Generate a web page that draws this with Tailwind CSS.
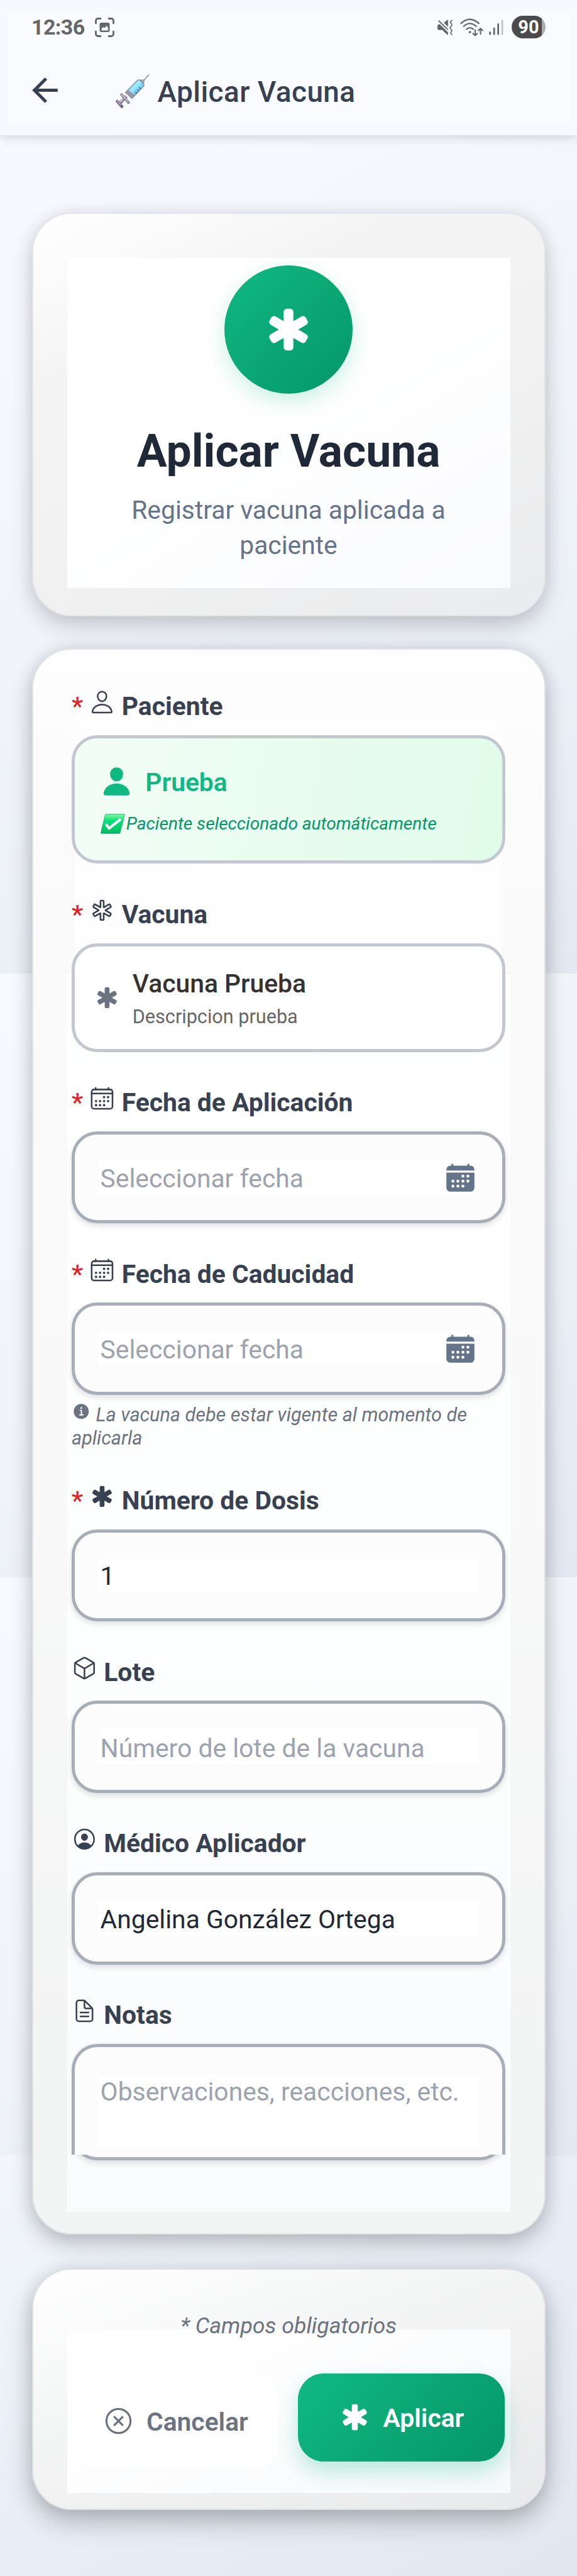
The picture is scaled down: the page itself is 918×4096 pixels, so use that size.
<!DOCTYPE html>
<html lang="es">
<head>
<meta charset="utf-8">
<title>Aplicar Vacuna</title>
<script src="https://cdn.jsdelivr.net/npm/@tailwindcss/browser@4"></script>
</head>
<body class="relative h-[4096px] w-[918px] overflow-hidden bg-[#f1f5fa] font-[Roboto,sans-serif] text-[40.8px] leading-[48px]">

<!-- Icon set -->
<svg class="hidden">
  <symbol id="person-outline" viewBox="0 0 512 512"><g fill="none" stroke="currentColor" stroke-width="32" stroke-linecap="round" stroke-linejoin="round"><path d="M344 144c-3.92 52.87-44 96-88 96s-84.15-43.12-88-96c-4-55 35-96 88-96s92 42 88 96z"/><path d="M256 304c-87 0-175.3 48-191.64 138.6C62.39 453.52 68.57 464 80 464h352c11.44 0 17.62-10.48 15.65-21.4C431.3 352 343 304 256 304z"/></g></symbol>
  <symbol id="person" viewBox="0 0 512 512"><path fill="currentColor" d="M332.64 64.58C313.18 43.57 286 32 256 32c-30.16 0-57.43 11.5-76.8 32.38-19.58 21.11-29.12 49.8-26.88 80.78C156.76 206.28 203.27 256 256 256s99.16-49.71 103.67-110.82c2.27-30.7-7.33-59.33-27.03-80.6zM432 480H80a31 31 0 01-24.2-11.13c-6.5-7.77-9.12-18.38-7.18-29.11C57.06 392.94 83.4 353.61 124.8 326c36.78-24.51 83.37-38 131.2-38s94.42 13.5 131.2 38c41.4 27.6 67.74 66.93 76.18 113.75 1.94 10.73-.68 21.34-7.18 29.11A31 31 0 01432 480z"/></symbol>
  <symbol id="medical" viewBox="0 0 512 512"><path fill="currentColor" d="M272 464h-32a32 32 0 01-32-32l.05-85.82a4 4 0 00-6-3.47l-74.34 43.06a31.48 31.48 0 01-43-11.52l-16.5-28.64-.06-.1a31.65 31.65 0 0111.56-42.8l74.61-43.25a4 4 0 000-6.92l-74.54-43.21a31.41 31.41 0 01-11.55-43l16.44-28.55a31.48 31.48 0 0119.27-14.74 31.14 31.14 0 0123.8 3.2l74.31 43a4 4 0 006-3.47L208 80a32 32 0 0132-32h32a32 32 0 0132 32v85.72a4 4 0 006 3.47l74.34-43.06a31.51 31.51 0 0143 11.52l16.49 28.64.06.09a31.52 31.52 0 01-11.64 42.86l-74.53 43.2a4 4 0 000 6.92l74.53 43.2a31.42 31.42 0 0111.56 43l-16.44 28.55a31.48 31.48 0 01-19.27 14.74 31.14 31.14 0 01-23.8-3.2l-74.31-43a4 4 0 00-6 3.46L304 432a32 32 0 01-32 32z"/></symbol>
  <symbol id="medical-outline" viewBox="0 0 512 512"><path fill="none" stroke="currentColor" stroke-width="32" d="M429.93 174.27l-16.47-28.59a15.49 15.49 0 00-21.15-5.7l-98.39 57a4 4 0 01-6-3.5L288 80a16 16 0 00-16-16h-32a16 16 0 00-16 16l.07 113.57a4 4 0 01-6 3.5l-98.39-57a15.49 15.49 0 00-21.15 5.7l-16.46 28.5a15.42 15.42 0 005.69 21.1l98.49 57.08a4 4 0 010 6.9l-98.49 57.08a15.54 15.54 0 00-5.69 21.1l16.47 28.59a15.49 15.49 0 0021.15 5.7l98.39-57a4 4 0 016 3.5L224 432a16 16 0 0016 16h32a16 16 0 0016-16l-.07-113.57a4 4 0 016-3.5l98.39 57a15.49 15.49 0 0021.15-5.7l16.47-28.59a15.42 15.42 0 00-5.69-21.1l-98.49-57.08a4 4 0 010-6.9l98.49-57.08a15.51 15.51 0 005.68-21.21z"/></symbol>
  <symbol id="calendar-outline" viewBox="0 0 512 512"><rect x="48" y="80" width="416" height="384" rx="48" fill="none" stroke="currentColor" stroke-width="32"/><path d="M128 48v32M384 48v32M464 160H48" fill="none" stroke="currentColor" stroke-width="32" stroke-linecap="round"/><g fill="currentColor"><circle cx="296" cy="232" r="24"/><circle cx="376" cy="232" r="24"/><circle cx="136" cy="312" r="24"/><circle cx="216" cy="312" r="24"/><circle cx="296" cy="312" r="24"/><circle cx="376" cy="312" r="24"/><circle cx="136" cy="392" r="24"/><circle cx="216" cy="392" r="24"/><circle cx="296" cy="392" r="24"/></g></symbol>
  <symbol id="calendar" viewBox="0 0 512 512"><path fill="currentColor" d="M480 128a64 64 0 00-64-64h-16V48.45c0-8.61-6.62-16-15.23-16.43A16 16 0 00368 48v16H144V48.45c0-8.61-6.62-16-15.23-16.43A16 16 0 00112 48v16H96a64 64 0 00-64 64v12a4 4 0 004 4h440a4 4 0 004-4zM32 416a64 64 0 0064 64h320a64 64 0 0064-64V179a3 3 0 00-3-3H35a3 3 0 00-3 3z"/><g fill="#fff"><circle cx="296" cy="232" r="24"/><circle cx="376" cy="232" r="24"/><circle cx="136" cy="312" r="24"/><circle cx="216" cy="312" r="24"/><circle cx="296" cy="312" r="24"/><circle cx="376" cy="312" r="24"/><circle cx="136" cy="392" r="24"/><circle cx="216" cy="392" r="24"/><circle cx="296" cy="392" r="24"/></g></symbol>
  <symbol id="cube-outline" viewBox="0 0 512 512"><g fill="none" stroke="currentColor" stroke-width="32" stroke-linecap="round" stroke-linejoin="round"><path d="M448 341.37V170.61A32 32 0 00432.11 143l-152-88.46a47.94 47.94 0 00-48.24 0L79.89 143A32 32 0 0064 170.61v170.76A32 32 0 0079.89 369l152 88.46a48 48 0 0048.24 0l152-88.46A32 32 0 00448 341.37z"/><path d="M69 153.99l187 110 187-110M256 463.99v-200"/></g></symbol>
  <symbol id="person-circle-outline" viewBox="0 0 512 512"><g fill="currentColor"><path d="M258.9 48C141.92 46.42 46.42 141.92 48 258.9c1.56 112.19 92.91 203.54 205.1 205.1 117 1.6 212.48-93.9 210.88-210.88C462.44 140.91 371.09 49.56 258.9 48zm126.42 327.25a4 4 0 01-6.14-.32 124.27 124.27 0 00-32.35-29.59C321.37 329 289.11 320 256 320s-65.37 9-90.83 25.34a124.24 124.24 0 00-32.35 29.58 4 4 0 01-6.14.32A175.32 175.32 0 0180 259c-1.63-97.31 78.22-178.76 175.57-179S432 158.81 432 256a175.32 175.32 0 01-46.68 119.25z"/><path d="M256 144c-19.72 0-37.55 7.39-50.22 20.82s-19 32-17.57 51.93C191.11 256 221.52 288 256 288s64.83-32 67.79-71.24c1.48-19.74-4.8-38.14-17.68-51.82C293.39 151.44 275.59 144 256 144z"/></g></symbol>
  <symbol id="document-text-outline" viewBox="0 0 512 512"><g fill="none" stroke="currentColor" stroke-width="32" stroke-linecap="round" stroke-linejoin="round"><path d="M416 221.25V416a48 48 0 01-48 48H144a48 48 0 01-48-48V96a48 48 0 0148-48h98.75a32 32 0 0122.62 9.37l141.26 141.26a32 32 0 019.37 22.62z"/><path d="M256 56v120a32 32 0 0032 32h120M176 288h160M176 368h160"/></g></symbol>
  <symbol id="information-circle" viewBox="0 0 512 512"><path fill="currentColor" d="M256 56C145.72 56 56 145.72 56 256s89.72 200 200 200 200-89.72 200-200S366.28 56 256 56zm0 82a26 26 0 11-26 26 26 26 0 0126-26zm48 226h-88a16 16 0 010-32h28v-88h-16a16 16 0 010-32h32a16 16 0 0116 16v104h28a16 16 0 010 32z"/></symbol>
  <symbol id="close-circle-outline" viewBox="0 0 512 512"><g fill="none" stroke="currentColor" stroke-width="32" stroke-linecap="round" stroke-linejoin="round"><path d="M448 256c0-106-86-192-192-192S64 150 64 256s86 192 192 192 192-86 192-192z"/><path d="M320 320L192 192M192 320l128-128"/></g></symbol>
</svg>

<!-- Page background bands -->
<div class="absolute inset-0 -z-10 flex flex-col">
  <div class="h-[1548px] bg-[linear-gradient(150deg,#f9faff_0%,#f2f6fb_45%,#e9edf5_85%,#e4e9f1_100%)]"></div>
  <div class="h-[960px] bg-[linear-gradient(145deg,#f7fbff_0%,#f0f4f9_50%,#e3e8f2_100%)]"></div>
  <div class="h-[919px] bg-[linear-gradient(145deg,#f7fbff_0%,#f0f4f9_50%,#e3e8f2_100%)]"></div>
  <div class="grow bg-[linear-gradient(150deg,#f3f7fc_0%,#e8edf6_55%,#e1e8f0_100%)]"></div>
</div>

<header class="relative z-10 h-[215px] bg-[#f7f9fe] px-[13px] pt-[18px] shadow-[0_3px_16px_rgba(0,0,0,0.16)]">
  <div class="h-[181px] bg-[#f9fbff]">
    <!-- Status bar -->
    <div class="flex h-[50px] items-center pr-[37px] pl-[37px] text-[#666]">
      <span class="text-[34px] font-bold tracking-[-0.6px]">12:36</span>
      <svg class="ml-[16px] size-[31px]" viewBox="0 0 31 31"><path d="M1.5 9V5a3.5 3.5 0 0 1 3.5-3.5h4M22 1.5h4A3.5 3.5 0 0 1 29.500 5v4M29.500 22v4a3.5 3.5 0 0 1-3.500 3.500h-4M9 29.500H5A3.500 3.500 0 0 1 1.500 26v-4" fill="none" stroke="currentColor" stroke-width="2.800" stroke-linecap="round"/><rect x="7.500" y="8" width="16" height="15" rx="3" fill="currentColor"/><path d="M10.500 20.500v-3l3-2.500 2 1.500 3-3.500 2.500 3v4.500z" fill="#f9fbff"/></svg>
      <div class="ml-auto flex items-center">
        <svg class="h-[25px] w-[26px]" viewBox="154 82 120 120"><path d="M156 132q0-13 13-13h6l62 60v14q0 8-6 5l-38-36h-24q-13 0-13-13zM237 138V88q0-6-5-3l-27 22z" fill="currentColor"/><path d="M167 92l68 68" stroke="#f9fbff" stroke-width="20"/><path d="M167 93l66 64" stroke="currentColor" stroke-width="9" stroke-linecap="round"/><path d="M268 89q-18 10-12 18 16 16 8 24-16 14-8 22 16 12 8 20-14 12 3 24" fill="none" stroke="currentColor" stroke-width="8" stroke-linecap="round"/></svg>
        <svg class="ml-[11px] h-[29px] w-[37px]" viewBox="329 74 175 134"><g fill="none" stroke="currentColor" stroke-width="11" stroke-linecap="round"><path d="M336 111q66-60 134 0M356 133q46-42 94 0M378 155q25-22 50 0"/></g><circle cx="403" cy="177" r="9" fill="currentColor"/><path d="M442 160v42M426 187l16 16 16-16M483 192v-42M467 165l16-16 16 16" stroke="currentColor" stroke-width="10" fill="none" stroke-linecap="round" stroke-linejoin="round"/></svg>
        <svg class="ml-[9px] h-[25px] w-[23px]" viewBox="541 82 110 118"><g stroke="currentColor" stroke-width="13" stroke-linecap="round"><path d="M549 179v14M580 149v44M611 117v76"/><path d="M642 89v104" opacity=".4"/></g></svg>
        <div class="ml-[13px] flex h-[36px] w-[54px] items-center justify-center rounded-full bg-[linear-gradient(90deg,#4b4b4b_89%,#aeaeb0_89%)] text-[29px] font-bold text-white"><span>90</span></div>
      </div>
    </div>
    <!-- App bar -->
    <div class="mt-[45px] flex h-[60px] items-center pl-[28px] text-[#374151]">
      <svg class="size-[61px]" viewBox="0 0 24 24"><path fill="currentColor" d="M20 11H7.830l5.590-5.590L12 4l-8 8 8 8 1.410-1.410L7.830 13H20z"/></svg>
      <svg class="ml-[82px] mt-1 size-[54px]" viewBox="0 0 54 54">
        <defs><linearGradient id="fluid" x1="0" y1="0" x2="1" y2="1"><stop offset="0" stop-color="#5ccdfb"/><stop offset=".45" stop-color="#9cecff"/><stop offset="1" stop-color="#2f7fdc"/></linearGradient></defs>
        <path d="M53 .5 43 12" stroke="#8d8d95" stroke-width="1.600"/>
        <path d="M38 9l7 7 1-5-3-3z" fill="#a39eab"/>
        <path d="M35 9.500q2-1.500 4 .5l5 5q2 2 .5 4L26 38.500 15.500 29z" fill="url(#fluid)" stroke="#7c8aa8" stroke-width="1.300"/>
        <path d="M30.500 33.500 26 38.500 15.500 29l4-4.500z" fill="#9b95a8"/>
        <path d="M40 23l-3-2M37 26.500l-3-2M34 30l-3-2" stroke="#21508f" stroke-width="1.200"/>
        <path d="M17 35 6 47" stroke="#8e8699" stroke-width="5.500"/><path d="M16.500 34 6 45.500" stroke="#d5d0dc" stroke-width="1.800"/>
        <path d="M9.500 32.500 20.500 45" stroke="#8b8494" stroke-width="4.500" stroke-linecap="round"/><path d="M9.500 32 20 44" stroke="#cdc8d3" stroke-width="1.600" stroke-linecap="round"/>
        <path d="M2.500 43 10 51.500" stroke="#6f5f7e" stroke-width="4.500" stroke-linecap="round"/><path d="M2.500 42.500 8 48.500" stroke="#c5bfcc" stroke-width="1.600" stroke-linecap="round"/>
      </svg>
      <h1 class="ml-[12.500px] pt-[6px] text-[45.9px] font-medium tracking-[0.460px]">Aplicar Vacuna</h1>
    </div>
  </div>
</header>

<main class="flex flex-col px-[50.5px] pt-[123px]">

  <!-- Intro card -->
  <section class="h-[641.500px] rounded-[63px] border-[2.500px] border-[#e3e4e8] bg-[linear-gradient(155deg,#fff_0%,#f4f4f4_28%,#f1f1f1_60%,#eaebed_100%)] px-[54px] pt-[70px] shadow-[0_16px_36px_rgba(0,0,0,0.17),0_0_24px_rgba(0,0,0,0.08)]">
    <div class="flex h-[525px] flex-col items-center bg-[linear-gradient(150deg,#fff_40%,#fafbfe_100%)] pt-[12px] text-center">
      <div class="flex size-[204px] shrink-0 items-center justify-center rounded-full bg-linear-135 from-[#10b981] to-[#059669] text-white shadow-[0_12px_34px_rgba(16,185,129,0.22)]"><svg class="size-[82px]"><use href="#medical"/></svg></div>
      <h2 class="mt-[50px] text-[71.4px] leading-[84px] font-bold text-[#1f2937]">Aplicar Vacuna</h2>
      <p class="mt-[22.500px] w-[560px] text-[40.8px] leading-[56px] text-[#64748b]">Registrar vacuna aplicada a paciente</p>
    </div>
  </section>

  <!-- Form card -->
  <section class="relative mt-[51px] h-[2522.500px] rounded-[63px] border-[2.500px] border-[#e0e2e6] bg-[linear-gradient(180deg,#fefefe_0%,#fafafa_15%,#f8f9f8_50%,#f2f3f3_100%)] px-[61.500px] pt-[66.500px] text-[#374151] shadow-[0_16px_36px_rgba(0,0,0,0.2),0_0_26px_rgba(0,0,0,0.1)]">
    <div class="absolute inset-x-[54px] top-[99px] flex flex-col">
      <div class="mx-[12.500px] h-[417px] bg-[#fefefe]"></div>
      <div class="h-[1968px] bg-[linear-gradient(180deg,#fff_0%,#fdfefe_50%,#fafbfd_100%)]"></div>
    </div>

    <div class="relative flex flex-col gap-[56.600px]">
      <div>
        <div class="flex h-12 items-start font-bold"><span class="w-[28.300px] font-medium text-[#dc2626]">*</span><svg class="-mt-[3px] mr-[10.700px] size-[40.8px]"><use href="#person-outline"/></svg>Paciente</div>
        <div class="mt-[21.600px] flex h-[204.800px] flex-col rounded-[40.8px] border-[5.100px] border-[#c3c8d0] bg-linear-100 from-[#f2fdf6] to-[#e1fce9] bg-clip-padding px-[40.8px] pt-[40px]">
          <div class="flex h-[58px] items-center text-[#10b981]"><svg class="mr-[20.500px] size-[51px]"><use href="#person"/></svg><span class="pt-[3px] font-semibold">Prueba</span></div>
          <div class="mt-[18px] flex h-[40px] items-center text-[28.050px] text-[#059669] italic">
            <svg class="mr-[2px] h-[32px] w-[39px]" viewBox="0 0 39 32"><defs><linearGradient id="tick" x1="0" y1="0" x2="0" y2="1"><stop offset="0" stop-color="#8cf59b"/><stop offset=".35" stop-color="#00df7c"/><stop offset=".9" stop-color="#00c463"/><stop offset="1" stop-color="#0aa08c"/></linearGradient></defs><path d="M9 .7h28q1.400 0 1.100 1.400l-7 27.700q-.4 1.500-2 1.500H1.600q-1.400 0-1-1.500L7.300 2.100Q7.600.7 9 .7z" fill="url(#tick)" stroke="#12a868" stroke-width=".8"/><path d="M8.500 16.500l5 6.500L32 8.500" fill="none" stroke="#fff" stroke-width="4.200"/></svg>
            <span>Paciente seleccionado automáticamente</span>
          </div>
        </div>
      </div>

      <div>
        <div class="flex h-12 items-start font-bold"><span class="w-[28.300px] font-medium text-[#dc2626]">*</span><svg class="-mt-[3px] mr-[10.700px] size-[40.8px]"><use href="#medical-outline"/></svg>Vacuna</div>
        <div class="mt-[21.600px] flex h-[173px] items-center rounded-[40.8px] border-[5.100px] border-[#c3c8d0] bg-white px-[30.600px]">
          <svg class="mr-[20.400px] size-[40.8px] text-[#6b7280]"><use href="#medical"/></svg>
          <div class="flex flex-col pt-[5px]">
            <span class="font-medium text-[#333]">Vacuna Prueba</span>
            <span class="mt-[9px] text-[30.600px] leading-[40px] text-[#666]">Descripcion prueba</span>
          </div>
        </div>
      </div>

      <div>
        <div class="flex h-12 items-start font-bold"><span class="w-[28.300px] font-medium text-[#dc2626]">*</span><svg class="-mt-[3px] mr-[10.700px] size-[40.8px]"><use href="#calendar-outline"/></svg>Fecha de Aplicación</div>
        <div class="mt-[21.600px] flex h-[146.500px] items-center rounded-[40.8px] border-[5.100px] border-[#a8aeb8] bg-[#fcfcfc] px-[39px] shadow-[0_4px_10px_rgba(0,0,0,0.13)]">
          <div class="flex h-[55px] grow items-center justify-between bg-white pr-[2px] pl-[1.600px] text-[#9ca3af]"><span class="pt-[3px]">Seleccionar fecha</span><svg class="size-[51px] text-[#64748b]"><use href="#calendar"/></svg></div>
        </div>
      </div>

      <div>
        <div class="flex h-12 items-start font-bold"><span class="w-[28.300px] font-medium text-[#dc2626]">*</span><svg class="-mt-[3px] mr-[10.700px] size-[40.8px]"><use href="#calendar-outline"/></svg>Fecha de Caducidad</div>
        <div class="mt-[21.600px] flex h-[146.500px] items-center rounded-[40.8px] border-[5.100px] border-[#a8aeb8] bg-[#fcfcfc] px-[39px] shadow-[0_4px_10px_rgba(0,0,0,0.13)]">
          <div class="flex h-[55px] grow items-center justify-between bg-white pr-[2px] pl-[1.600px] text-[#9ca3af]"><span class="pt-[3px]">Seleccionar fecha</span><svg class="size-[51px] text-[#64748b]"><use href="#calendar"/></svg></div>
        </div>
        <p class="mt-[14px] h-[73.500px] text-[30.600px] leading-[36.700px] text-[#6b7280] italic"><svg class="-mt-[16px] mr-[8px] inline-block size-[30.600px] align-middle"><use href="#information-circle"/></svg>La vacuna debe estar vigente al momento de aplicarla</p>
      </div>

      <div>
        <div class="flex h-12 items-start font-bold"><span class="w-[28.300px] font-medium text-[#dc2626]">*</span><svg class="-mt-[3px] mr-[10.700px] size-[40.8px]"><use href="#medical"/></svg>Número de Dosis</div>
        <div class="mt-[21.600px] flex h-[146.500px] items-center rounded-[40.8px] border-[5.100px] border-[#a8aeb8] bg-[#fcfcfc] px-[39px] shadow-[0_4px_10px_rgba(0,0,0,0.13)]">
          <div class="flex h-[51px] grow items-center bg-white pl-[1.600px] text-[#1f2937]"><span class="pt-[3px]">1</span></div>
        </div>
      </div>

      <div>
        <div class="flex h-12 items-start font-bold"><svg class="-mt-[3px] mr-[10.500px] size-[40.8px]"><use href="#cube-outline"/></svg>Lote</div>
        <div class="mt-[21.600px] flex h-[146.500px] items-center rounded-[40.8px] border-[5.100px] border-[#a8aeb8] bg-[#fcfcfc] px-[39px] shadow-[0_4px_10px_rgba(0,0,0,0.13)]">
          <div class="flex h-[55px] grow items-center bg-white pl-[1.600px] text-[#9ca3af]"><span class="pt-[4px]">Número de lote de la vacuna</span></div>
        </div>
      </div>

      <div>
        <div class="flex h-12 items-start font-bold"><svg class="-mt-[3px] mr-[10.500px] size-[40.8px]"><use href="#person-circle-outline"/></svg>Médico Aplicador</div>
        <div class="mt-[21.600px] flex h-[146.500px] items-center rounded-[40.8px] border-[5.100px] border-[#a8aeb8] bg-[#fcfcfc] px-[39px] shadow-[0_4px_10px_rgba(0,0,0,0.13)]">
          <div class="flex h-[55px] grow items-center bg-white pl-[1.600px] text-[#1f2937]"><span class="pt-[3px]">Angelina González Ortega</span></div>
        </div>
      </div>

      <div>
        <div class="flex h-12 items-start font-bold"><svg class="-mt-[3px] mr-[10.500px] size-[40.8px]"><use href="#document-text-outline"/></svg>Notas</div>
        <div class="mt-[21.600px] flex h-[176px] items-start rounded-t-[40.8px] border-[5.100px] border-b-0 border-[#a8aeb8] bg-[#fcfcfc] px-[39px] pt-[47px] shadow-[0_-1px_6px_rgba(0,0,0,0.06)]">
          <div class="h-[112px] grow bg-white pl-[1.600px] text-[#9ca3af]">Observaciones, reacciones, etc.</div>
        </div>
        <!-- Bottom rim of the notes field -->
        <div class="-mx-[7px] flex h-[26px] items-start overflow-hidden px-[7px]">
          <div class="-mt-[90px] h-[99.500px] grow rounded-[40.8px] border-[5.100px] border-[#a8aeb8] bg-[#fcfcfc] shadow-[0_4px_10px_rgba(0,0,0,0.13)]"></div>
        </div>
      </div>
    </div>
  </section>

  <!-- Actions card -->
  <section class="mt-[53.500px] h-[384px] rounded-[63px] border-[2.500px] border-[#dfe1e5] bg-[linear-gradient(160deg,#fff_0%,#f5f6f6_35%,#f1f1f1_60%,#e8e9eb_100%)] px-[54px] pt-[95px] shadow-[0_18px_40px_rgba(0,0,0,0.25),0_0_26px_rgba(0,0,0,0.08)]">
    <div class="flex h-[260px] flex-col bg-[linear-gradient(150deg,#fefeff_30%,#f7f9fa_100%)]">
      <p class="-mt-[29.500px] text-center text-[35.700px] text-[#6b7280] italic">* Campos obligatorios</p>
      <div class="mt-[51.500px] flex items-start px-[8px] font-semibold">
        <button class="flex h-[151px] w-[328px] items-center rounded-[40.8px] bg-white pl-[48px] text-[#6b7280]"><svg class="mr-[19.500px] size-[51px]"><use href="#close-circle-outline"/></svg><span class="pt-[3px]">Cancelar</span></button>
        <button class="ml-[31px] flex h-[140px] w-[329px] items-center rounded-[40.8px] bg-linear-135 from-[#10b981] to-[#059669] pl-[65px] text-white shadow-[0_16px_34px_rgba(16,185,129,0.28)]"><svg class="mr-[20px] size-[51px]"><use href="#medical"/></svg><span class="pt-[3px]">Aplicar</span></button>
      </div>
    </div>
  </section>
</main>
</body>
</html>
